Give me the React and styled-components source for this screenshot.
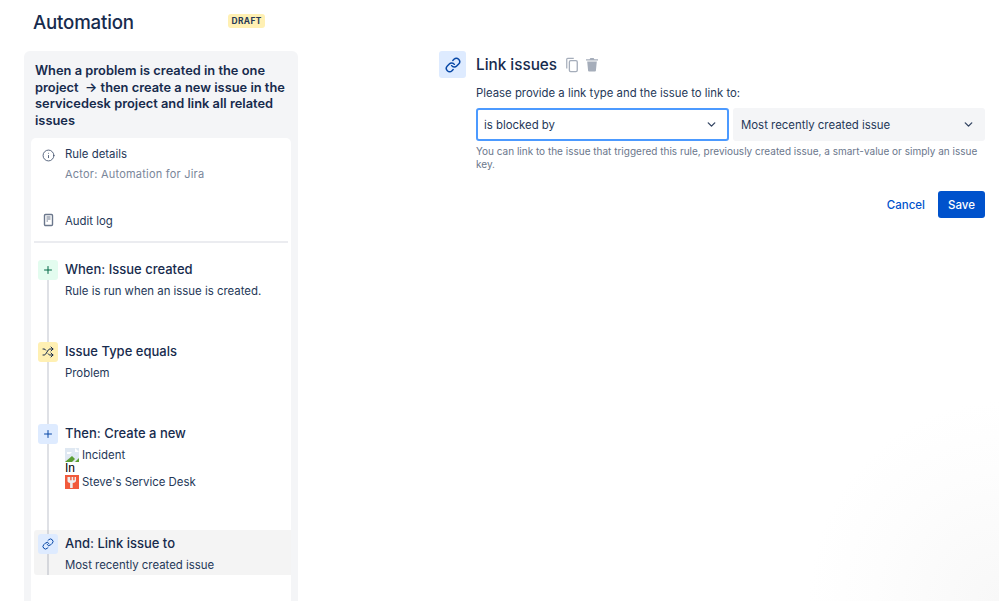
import React from 'react'
import styled, { createGlobalStyle } from 'styled-components'
import { ChevronDown, Info, Link as LinkIcon, Plus, Shuffle } from 'lucide-react'

const Global = createGlobalStyle`
  html, body { margin: 0; padding: 0; background: #fff; }
  body { font-family: Inter, "Liberation Sans", sans-serif; color: #172b4d; }
  * { box-sizing: border-box; }
`

const Page = styled.div`
  width: 999px;
  height: 601px;
  overflow: hidden;
  display: flex;
  background: radial-gradient(ellipse 190px 200px at 100% 100%, #f8f8f8 0%, #fdfdfd 65%, #ffffff 100%);
`

const Sidebar = styled.aside`
  width: 274px;
  margin-left: 24px;
  flex: none;
  display: flex;
  flex-direction: column;
`

const PageHead = styled.header`
  height: 51px;
  padding: 11px 0 0 9px;
  display: flex;
  align-items: flex-start;
`

const PageTitle = styled.h1`
  margin: 0;
  width: 195px;
  font-size: 18.7px;
  line-height: 24px;
  font-weight: 500;
  letter-spacing: -0.2px;
`

const Draft = styled.span`
  margin-top: 3px;
  height: 14px;
  padding: 0 3.5px;
  background: #fff0b3;
  border-radius: 3px;
  font-size: 8.4px;
  line-height: 14px;
  font-weight: 700;
  letter-spacing: 0.4px;
  color: #253858;
`

const Panel = styled.div`
  flex: 1;
  min-height: 0;
  background: #f4f5f7;
  border-radius: 6px 6px 0 0;
  padding: 12px 7px 0;
`

const RuleName = styled.h2`
  margin: 0 0 9px 4px;
  font-size: 12.85px;
  line-height: 16.6px;
  font-weight: 600;
`

const Card = styled.div`
  position: relative;
  height: 470px;
  background: #fff;
  border-radius: 5px 5px 0 0;
  padding: 0 0 0 3px;
  overflow: hidden;
`

const MetaRow = styled.div`
  display: flex;
  gap: 10px;
  padding-left: 8px;
  height: ${p => p.$height}px;
  padding-top: ${p => p.$top}px;
  color: #42526e;
`

const MetaTitle = styled.div`
  font-size: 11.4px;
  line-height: 16px;
  color: #253858;
`

const MetaSub = styled.div`
  margin-top: 4px;
  font-size: 11px;
  line-height: 16px;
  color: #7a869a;
  letter-spacing: 0.22px;
`

const Divider = styled.hr`
  margin: 0 3px 0 0;
  border: none;
  height: 2px;
  background: #ebecf0;
`

const Timeline = styled.div`
  position: relative;
  padding-top: 17px;
  &::before {
    content: "";
    position: absolute;
    left: 13px;
    top: 20px;
    bottom: 0;
    width: 2px;
    background: #dfe1e6;
  }
`

const Step = styled.div`
  position: relative;
  display: flex;
  gap: 7px;
  padding: ${p => (p.$active ? '4px 0 0 4px' : '0 0 0 4px')};
  height: ${p => p.$height}px;
  background: ${p => (p.$active ? 'rgba(0, 0, 0, 0.045)' : 'transparent')};
  border-radius: 3px 0 0 3px;
`

const StepIcon = styled.span`
  position: relative;
  flex: none;
  width: 20px;
  height: 20px;
  border-radius: 3px;
  display: flex;
  align-items: center;
  justify-content: center;
  background: ${p => p.$bg};
  color: ${p => p.$color};
`

const StepTitle = styled.div`
  font-size: 13px;
  line-height: 18px;
  font-weight: 500;
  margin-bottom: 5px;
`

const StepText = styled.div`
  font-size: 11.4px;
  line-height: 16px;
  color: #253858;
`

const IconLines = styled.div`
  padding-top: 1px;
`

const IconLine = styled.div`
  display: flex;
  align-items: center;
  gap: 3px;
  height: 14px;
  font-size: 11.4px;
  color: #253858;
`

const Word = styled.div`
  font-family: "Liberation Sans", sans-serif;
  font-size: 12px;
  line-height: 13px;
  color: #000;
`

const Main = styled.main`
  margin-left: 141px;
  width: 546px;
  padding-top: 51px;
  display: flex;
  gap: 10px;
  align-items: flex-start;
`

const BigIcon = styled.span`
  flex: none;
  width: 27px;
  height: 27px;
  border-radius: 3px;
  background: #deebff;
  color: #0747a6;
  display: flex;
  align-items: center;
  justify-content: center;
`

const Form = styled.div`
  flex: 1;
  min-width: 0;
`

const TitleRow = styled.div`
  height: 27px;
  display: flex;
  align-items: center;
  gap: 6px;
  color: #a5adba;
`

const FormTitle = styled.h3`
  margin: 0 2px 0 0;
  font-size: 15.3px;
  line-height: 27px;
  font-weight: 500;
  color: #172b4d;
`

const Label = styled.div`
  margin-top: 7px;
  font-size: 11.35px;
  line-height: 16px;
  color: #253858;
`

const Selects = styled.div`
  margin-top: 7px;
  display: flex;
  gap: 4px;
`

const Select = styled.div`
  flex: 1;
  height: 33px;
  padding: 0 ${p => (p.$focus ? 9 : 10)}px 0 ${p => (p.$focus ? 6 : 8)}px;
  display: flex;
  align-items: center;
  justify-content: space-between;
  border-radius: 3px;
  border: ${p => (p.$focus ? '2px solid #4c9aff' : 'none')};
  background: ${p => (p.$focus ? '#fff' : '#f4f5f7')};
  font-size: 11.4px;
  color: #253858;
  svg { color: #344563; }
`

const Help = styled.p`
  margin: 4px 0 0;
  font-size: 10px;
  line-height: 13px;
  color: #6b778c;
`

const Actions = styled.div`
  margin-top: 20px;
  display: flex;
  justify-content: flex-end;
  align-items: center;
  gap: 13px;
`

const TextButton = styled.button`
  border: none;
  background: none;
  padding: 0;
  font: 500 11.5px Inter, sans-serif;
  color: #0052cc;
`

const SaveButton = styled.button`
  width: 47px;
  height: 27px;
  border: none;
  border-radius: 3px;
  background: #0052cc;
  color: #fff;
  font: 500 11.5px Inter, sans-serif;
`

const DocIcon = () => (
  <svg width="13" height="14" viewBox="0.5 0 13 14" fill="none">
    <rect x="3" y="1.5" width="8" height="11" rx="1" stroke="#6b778c" strokeWidth="1.4" />
    <path d="M5 4h4M5 6h4M5 8h1.5" stroke="#6b778c" strokeWidth="1.2" />
  </svg>
)

const CopyIcon = () => (
  <svg width="14" height="16" viewBox="0 0 16 18" fill="none">
    <path d="M2 13V2.5C2 1.9 2.4 1.5 3 1.5h7" stroke="#a5adba" strokeWidth="1.4" />
    <rect x="5" y="4" width="9" height="12.5" rx="1.5" stroke="#a5adba" strokeWidth="1.5" />
  </svg>
)

const TrashIcon = () => (
  <svg width="14" height="15" viewBox="0 0 14 15">
    <path d="M1 2.2h3.6L5.4 1h3.2l.8 1.2H13v1.4H1z" fill="#a5adba" />
    <path d="M2.2 4.6h9.6l-.9 9.2c0 .5-.4.8-.9.8H4c-.5 0-.9-.3-.9-.8z" fill="#a5adba" />
  </svg>
)

const BrokenImage = () => (
  <svg width="14" height="14" viewBox="0 0 14 14">
    <rect width="14" height="14" fill="#dfe8f2" />
    <path d="M2 4h5l-2 2H2z" fill="#fff" />
    <path d="M0 14l7-6 3 3-3 3z" fill="#5a9e32" />
    <path d="M10 14l4-4v4z" fill="#5a9e32" />
    <path d="M10 0l4 4h-4z" fill="#fff" />
  </svg>
)

const DeskIcon = () => (
  <svg width="14" height="14" viewBox="0 0 14 14">
    <rect width="14" height="14" fill="#f15a3c" />
    <path d="M2.5 2v3.7c0 1.3 1 2.1 2.6 2.4V13h2.6V8.1c1.9-.3 3.3-1.2 3.3-2.4V2H9.6v3.2H8.2V2H6.6v3.2H5.2V2z" fill="#eeeeee" />
  </svg>
)

const App = () => {
  return (
    <Page>
      <Global />
      <Sidebar>
        <PageHead>
          <PageTitle>Automation</PageTitle>
          <Draft>DRAFT</Draft>
        </PageHead>
        <Panel>
          <RuleName>
            When a problem is created in the one project &nbsp;→ then create a new issue in the servicedesk project and link all related issues
          </RuleName>
          <Card>
            <MetaRow $height={71} $top={8}>
              <Info size={13} strokeWidth={1.6} style={{ marginTop: 3 }} />
              <div>
                <MetaTitle>Rule details</MetaTitle>
                <MetaSub>Actor: Automation for Jira</MetaSub>
              </div>
            </MetaRow>
            <MetaRow $height={32} $top={4}>
              <DocIcon />
              <MetaTitle>Audit log</MetaTitle>
            </MetaRow>
            <Divider />
            <Timeline>
              <Step $height={82}>
                <StepIcon $bg="#e3fcef" $color="#006644"><Plus size={12} strokeWidth={2} /></StepIcon>
                <div>
                  <StepTitle>When: Issue created</StepTitle>
                  <StepText>Rule is run when an issue is created.</StepText>
                </div>
              </Step>
              <Step $height={82}>
                <StepIcon $bg="#fff0b3" $color="#172b4d"><Shuffle size={12} strokeWidth={2} /></StepIcon>
                <div>
                  <StepTitle>Issue Type equals</StepTitle>
                  <StepText>Problem</StepText>
                </div>
              </Step>
              <Step $height={106}>
                <StepIcon $bg="#deebff" $color="#0747a6"><Plus size={12} strokeWidth={2} /></StepIcon>
                <div>
                  <StepTitle>Then: Create a new</StepTitle>
                  <IconLines>
                    <IconLine><BrokenImage /> Incident</IconLine>
                    <Word>In</Word>
                    <IconLine><DeskIcon /> Steve's Service Desk</IconLine>
                  </IconLines>
                </div>
              </Step>
              <Step $active $height={45}>
                <StepIcon $bg="#deebff" $color="#0747a6"><LinkIcon size={12} strokeWidth={2} /></StepIcon>
                <div>
                  <StepTitle>And: Link issue to</StepTitle>
                  <StepText>Most recently created issue</StepText>
                </div>
              </Step>
            </Timeline>
          </Card>
        </Panel>
      </Sidebar>
      <Main>
        <BigIcon><LinkIcon size={16} strokeWidth={2.2} /></BigIcon>
        <Form>
          <TitleRow>
            <FormTitle>Link issues</FormTitle>
            <CopyIcon />
            <TrashIcon />
          </TitleRow>
          <Label>Please provide a link type and the issue to link to:</Label>
          <Selects>
            <Select $focus>
              is blocked by
              <ChevronDown size={13} strokeWidth={2.5} />
            </Select>
            <Select>
              Most recently created issue
              <ChevronDown size={13} strokeWidth={2.5} />
            </Select>
          </Selects>
          <Help>You can link to the issue that triggered this rule, previously created issue, a smart-value or simply an issue key.</Help>
          <Actions>
            <TextButton>Cancel</TextButton>
            <SaveButton>Save</SaveButton>
          </Actions>
        </Form>
      </Main>
    </Page>
  )
}

export default App
